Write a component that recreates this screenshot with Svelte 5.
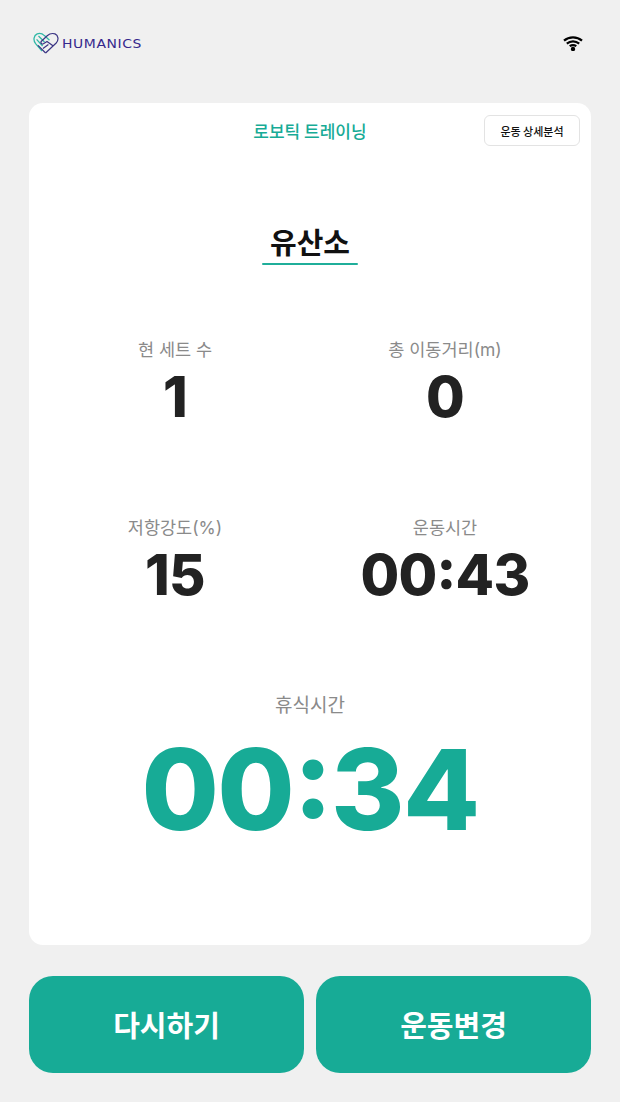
<script>
  const stats = [
    { label: '현 세트 수', value: '1' },
    { label: '총 이동거리(m)', value: '0' },
    { label: '저항강도(%)', value: '15' },
    { label: '운동시간', value: '00:43' }
  ];
</script>

<div class="page">
  <header class="top">
    <div class="logo">
      <svg width="26" height="22" viewBox="0 0 26 22" fill="none">
        <path d="M9 19 L2.6 11.6 C0 8.4 0.6 3.4 4.2 1.8 C6.8 0.8 9.4 1.6 11.4 3.6 L16.5 8.2" stroke="#2fb8a6" stroke-width="1.3" stroke-linejoin="round"/>
        <path d="M5.5 4 L11.5 10 M3.6 7.4 L9.6 14" stroke="#2fb8a6" stroke-width="1.3"/>
        <path d="M12.6 21 L23.2 11 C26 8 25.4 3.4 22 1.9 C19 0.9 16.6 1.6 14.2 3.8 L8.4 9.2 C7.2 11 8.6 12.6 10.4 11.8 L14 9.4 L19.6 13.6" stroke="#3a3483" stroke-width="1.2" stroke-linejoin="round"/>
        <path d="M12.6 21 L5 13.4 M10 16.6 L15.4 12.6" stroke="#3a3483" stroke-width="1.2"/>
      </svg>
      <span class="brand">HUMANICS</span>
    </div>
    <svg class="wifi" width="20" height="16" viewBox="0 0 20 16" fill="none" stroke="#000" stroke-width="2.2">
      <path d="M1 5.6 C6 1.2 14 1.2 19 5.6"/>
      <path d="M3.8 8.6 C7.4 5.6 12.6 5.6 16.2 8.6"/>
      <path d="M6.7 11.2 C8.7 9.8 11.3 9.8 13.3 11.2"/>
      <circle cx="10" cy="14" r="2.2" fill="#000" stroke="none"/>
    </svg>
  </header>

  <main class="card">
    <div class="card-head">
      <h2>로보틱 트레이닝</h2>
      <button class="detail">운동 상세분석</button>
    </div>
    <div class="title-wrap">
      <h1>유산소</h1>
    </div>
    <div class="grid">
      {#each stats as s}
        <div class="stat">
          <div class="label">{s.label}</div>
          <div class="value">{s.value}</div>
        </div>
      {/each}
    </div>
    <div class="rest">
      <div class="label big">휴식시간</div>
      <div class="rest-time">00:34</div>
    </div>
  </main>

  <footer class="actions">
    <button class="cta">다시하기</button>
    <button class="cta">운동변경</button>
  </footer>
</div>

<style>
  :global(body) { margin: 0; background: #f0f0f0; }
  .page {
    width: 620px; height: 1102px; box-sizing: border-box;
    padding: 0 29px;
    display: flex; flex-direction: column;
    font-family: Inter, "Noto Sans CJK KR", sans-serif;
    background: #f0f0f0;
  }
  .top {
    height: 103px; display: flex; align-items: flex-start; justify-content: space-between;
    padding: 32px 8px 0 4px; box-sizing: border-box;
  }
  .logo { display: flex; align-items: center; gap: 3px; height: 22px; }
  .brand {
    font-family: "DejaVu Sans", sans-serif; font-size: 12px; color: #35288c;
    letter-spacing: 0.5px; margin-top: 1px; display: inline-block;
    transform: scaleX(1.16); transform-origin: left center;
  }
  .wifi { margin-top: 3px; }
  .card {
    height: 842px; background: #fff; border-radius: 14px; box-sizing: border-box;
    display: flex; flex-direction: column; align-items: center;
  }
  .card-head {
    width: 100%; height: 60px; position: relative;
    display: flex; justify-content: center; align-items: flex-start;
  }
  h2 {
    margin: 15px 0 0; font-size: 17px; line-height: 25px; font-weight: 500; color: #17ab96;
    font-family: "Noto Sans CJK KR", sans-serif;
  }
  .detail {
    position: absolute; right: 11px; top: 12px; width: 96px; height: 31px;
    background: #fff; border: 1px solid #e3e3e3; border-radius: 6px;
    font-family: "Noto Sans CJK KR", sans-serif; font-size: 11px; font-weight: 500; color: #111; padding: 0;
  }
  .title-wrap { margin-top: 58px; height: 46px; display: flex; flex-direction: column; align-items: center; }
  h1 {
    margin: 0; height: 42px; text-align: center;
    font-size: 29px; line-height: 40px; font-weight: 700; color: #111;
    font-family: "Noto Sans CJK KR", sans-serif;
  }
  .title-wrap::after {
    content: ''; display: block; width: 96px; height: 2px; border-radius: 2px; background: #1fae9a;
  }
  .grid {
    margin-top: 70px; width: 100%;
    display: grid; grid-template-columns: 1fr 1fr; row-gap: 84px;
    padding: 0 11px 0 11px; box-sizing: border-box; 
  }
  .stat { display: flex; flex-direction: column; align-items: center; }
  .label {
    font-size: 17.5px; line-height: 26px; color: #8a8a8a;
    font-family: Inter, "Noto Sans CJK KR", sans-serif;
  }
  .label.big { font-size: 19px; }
  .value {
    font-size: 56px; line-height: 68px; font-weight: 800; color: #222;
    letter-spacing: -0.7px; font-feature-settings: "calt" 1;
    font-family: Inter, sans-serif;
  }
  .rest { margin-top: 84px; display: flex; flex-direction: column; align-items: center; }
  .rest-time {
    font-size: 112px; line-height: 134px; font-weight: 800; color: #17ab96;
    letter-spacing: -1.6px; font-feature-settings: "calt" 1;
    font-family: Inter, sans-serif; margin-top: 3px;
  }
  .actions { margin-top: 31px; display: flex; gap: 12px; }
  .cta {
    flex: 1; height: 97px; border: 0; border-radius: 24px; background: #17ab96; color: #fff;
    font-family: "Noto Sans CJK KR", sans-serif; font-size: 29px; font-weight: 700; padding: 0 0 2px;
  }
</style>
